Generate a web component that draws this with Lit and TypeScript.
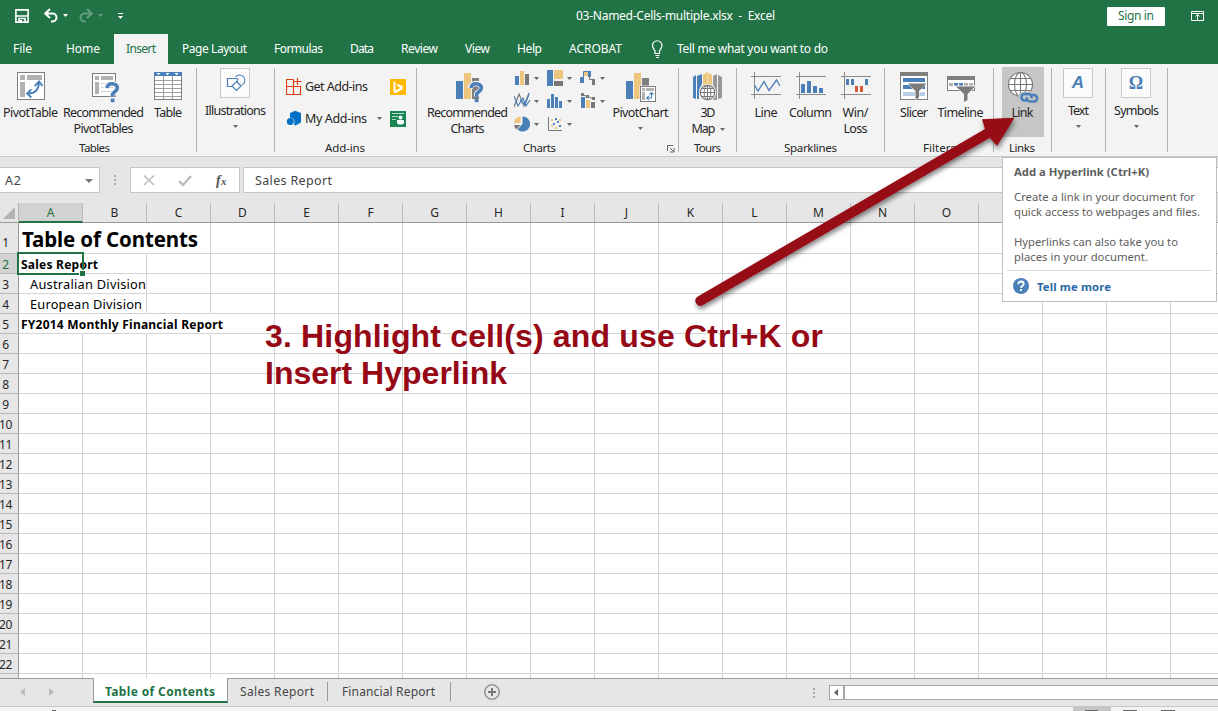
import { LitElement, html, svg, css } from "lit";
import { customElement, property } from "lit/decorators.js";

const BLUE = "#4a7fb8";
const TAN = "#eec57c";
const GREY = "#7f7f7f";

/* A single-line label whose tracking is adjusted to fill a given width. */
@customElement("fit-text")
class FitText extends LitElement {
  @property({ type: Number }) w = 0;
  @property() text = "";
  static styles = css`
    :host { display: block; flex: none; white-space: pre; }
    .box { display: block; }
    .run { display: inline-block; }
  `;
  updated() {
    const run = this.renderRoot.querySelector(".run") as HTMLElement;
    run.style.letterSpacing = "0px";
    const natural = run.getBoundingClientRect().width;
    run.style.letterSpacing = `${(this.w - natural) / Math.max(1, this.text.length - 1)}px`;
  }
  render() {
    return html`<span class="box" style="width:${this.w}px"><span class="run">${this.text}</span></span>`;
  }
}

const t = (text: string, w: number) => html`<fit-text .text=${text} .w=${w}></fit-text>`;

/* Icons share the window's coordinate system through their viewBox. */
const icon = (x: number, y: number, w: number, h: number, body: unknown) =>
  html`<svg class="icon" width=${w} height=${h} viewBox="${x} ${y} ${w} ${h}">${body}</svg>`;

const caret = () => html`<svg class="caret" width="5" height="3" viewBox="0 0 5 3"><path d="M0 0h5L2.500 3z" fill="currentColor"/></svg>`;

const question = (x: number, y: number) => svg`
  <g transform="translate(${x} ${y})" fill="none">
    <path d="M1 6.500C2 3 4 1.500 7 1.500S12.500 3.300 12.500 6.200C12.500 9.700 7.500 9.800 7.500 13.200V14.500" stroke="#f3f3f3" stroke-width="5.500"/>
    <path d="M2 6C2.500 3 4 1.700 7 1.700S12.300 3.300 12.300 6C12.300 9.500 7.500 9.800 7.500 13.200V14.700" stroke=${BLUE} stroke-width="3.600"/>
    <rect x="5.700" y="16.600" width="3.800" height="3.600" fill=${BLUE}/>
  </g>`;

const pivotIcon = icon(15, 70, 32, 32, svg`
  <rect x="17.500" y="72.500" width="27" height="27" fill="#fff" stroke=${GREY}/>
  <path d="M20 75h5v5h-5zM27 75h15v5H27zM20 82h5v15h-5z" fill="#b1b1b1"/>
  <path d="M28.500 93.500c6.500 0 10-3 10.500-11" fill="none" stroke=${BLUE} stroke-width="1.900"/>
  <path d="M34.800 86l4.300-4.600 3.400 4.600M31.300 89.300l-4.200 4.200 4.200 4" fill="none" stroke=${BLUE} stroke-width="1.900"/>`);

const recPivotIcon = icon(88, 70, 32, 34, svg`
  <rect x="92.500" y="73.500" width="23" height="23" fill="#fff" stroke=${GREY}/>
  <path d="M95 76h4v4h-4zM101 76h12v4h-12zM95 82h4v12h-4z" fill="#b1b1b1"/>
  <path d="M101 83.500h12M101 87.500h12M101 91.500h12" stroke="#cfcfcf" stroke-width="1"/>
  ${question(105, 82)}`);

const tableIcon = icon(152, 70, 32, 32, svg`
  <rect x="154.500" y="72.500" width="27" height="27" fill="#fff" stroke=${GREY}/>
  <rect x="154" y="72" width="28" height="4" fill=${BLUE}/>
  <path d="M156.500 73h4l-2 2.200zM165.500 73h4l-2 2.200zM174.500 73h4l-2 2.200z" fill="#fff"/>
  <path d="M163.500 76v23M172.500 76v23M155 80.500h26M155 84.500h26M155 88.500h26M155 92.500h26M155 96.500h26" stroke="#a0a0a0"/>`);

const shapesIcon = icon(221, 68, 30, 30, svg`
  <path d="M236.500 77a5.300 5.300 0 1 1 6 8.300" fill="none" stroke=${BLUE} stroke-width="1.100"/>
  <path d="M233.500 86.500h-5v-8h10v3" fill="none" stroke=${BLUE} stroke-width="1.200"/>
  <path d="M237.500 81.500l4.500 4.500-4.500 4.500-4.500-4.500z" fill="#fff" stroke=${BLUE} stroke-width="1.200"/>`);

const storeIcon = icon(286, 78, 16, 17, svg`
  <path d="M293.500 79.500h-7v15h14v-8h-14M293.500 79.500v15M297.500 78v7M294 81.500h7.500" fill="none" stroke="#dc3e15" stroke-width="1.200"/>`);

const myAddinsIcon = icon(286, 109, 17, 17, svg`
  <path d="M290 112l5-2.300 6 2.300v9.500l-5.500 3-1.500-.700c1.500-4-.500-6.800-4-7.300z" fill="#0072c6"/>
  <circle cx="290.300" cy="120.600" r="3.500" fill="#0072c6"/>`);

const bingIcon = icon(390, 78, 16, 16, svg`
  <rect x="390" y="78" width="16" height="16" fill="#ffb900"/>
  <path d="M393.500 80.500l2 .8v8.200l5-2.800-2.600-1.200-1.200-2.700 6 2.100v3.200l-7.200 4.200-2-1.200z" fill="#fff"/>`);

const peopleIcon = icon(390, 109, 16, 16, svg`
  <rect x="390" y="109" width="16" height="16" fill="#1a8554"/>
  <path d="M392 111.500h12M392 114.500h6M392 117.500h4" stroke="#b5dcc8" stroke-width="1"/>
  <circle cx="400.500" cy="115.500" r="1.900" fill="#fff"/>
  <path d="M397 118h7v3l-1.500 1.500h-4L397 121z" fill="#fff"/>`);

const recChartIcon = icon(452, 70, 32, 34, svg`
  <path d="M456 81h7v18h-7z" fill=${BLUE}/><path d="M464 73h7v26h-7z" fill=${TAN}/><path d="M472 78h7v21h-7z" fill=${GREY}/>
  ${question(469, 82)}`);

const pivotChartIcon = icon(624, 70, 34, 34, svg`
  <path d="M626 81h7v18h-7z" fill=${BLUE}/><path d="M634 73h7v26h-7z" fill=${TAN}/><path d="M642 78h7v8h-7z" fill=${GREY}/>
  <rect x="639.500" y="85.500" width="17" height="17" fill="#f3f3f3"/>
  <rect x="640.500" y="86.500" width="15" height="15" fill="#fff" stroke=${GREY}/>
  <path d="M642 88h3v3h-3zM646 88h8v3h-8zM642 92h3v8h-3z" fill="#b1b1b1"/>
  <path d="M647 98h4.500v-5M649 95.800L646.700 98l2.300 2.200M649.500 94.500l2-2 2 2" fill="none" stroke=${BLUE} stroke-width="1.100"/>`);

const smallCharts = [
  icon(514, 69, 18, 18, svg`<path d="M515 76h4v9h-4z" fill=${BLUE}/><path d="M520 71h4v14h-4z" fill=${TAN}/><path d="M525 74h4v11h-4z" fill="#777"/>`),
  icon(547, 69, 18, 18, svg`<path d="M547 70h6v16h-6z" fill=${BLUE}/><path d="M554 70h9v9h-9z" fill=${TAN}/><path d="M554 81h9v5h-9z" fill="#777"/>`),
  icon(580, 69, 18, 18, svg`<path d="M580 77h4v6h-4zM588 71h3v6h-3z" fill=${BLUE}/><path d="M584 72h4v4h-4z" fill=${TAN}/><path d="M592 79h3v6h-3z" fill="#777"/><path d="M583.500 79v-7.500h7" fill="none" stroke=${BLUE}/><path d="M589.500 76v3.500h3" fill="none" stroke="#777"/>`),
  icon(514, 92, 18, 18, svg`<path d="M514 107l5-13 5 12 5-13" fill="none" stroke="#777" stroke-width="1.200"/><path d="M514 96l4 10 5-8 3 8 4-6M520 100l5 5 4-11" fill="none" stroke=${BLUE} stroke-width="1.200"/>`),
  icon(547, 92, 18, 18, svg`<path d="M547 99h3v9h-3zM551 94h3v14h-3zM555 97h3v11h-3zM559 101h3v7h-3z" fill=${BLUE}/>`),
  icon(580, 92, 18, 18, svg`<path d="M581 97h4v11h-4z" fill=${BLUE}/><path d="M586 100h4v8h-4z" fill=${TAN}/><path d="M591 102h4v6h-4z" fill="#777"/><path d="M582 94.500l5.500 2 6 2.500" stroke="#777" fill="none"/><path d="M581 93h3v3h-3zM586 95h3v3h-3zM592 97h3v3h-3z" fill="#777"/>`),
  icon(514, 115, 18, 18, svg`<path d="M522.500 124v-7.500a7.500 7.500 0 1 1-5 13z" fill=${BLUE}/><path d="M520.500 116.500v6.500h-6.500a6.500 6.500 0 0 1 6.500-6.500z" fill=${TAN}/><path d="M514 125h6.500l-4 4.500a7 7 0 0 1-2.500-4.500z" fill="#777"/>`),
  icon(547, 115, 18, 18, svg`<path d="M548.500 117v13.500H562" fill="none" stroke="#777"/><path d="M551 119h2v2h-2zM559 119h2v2h-2zM551 125h2v2h-2zM555 127h2v2h-2z" fill=${TAN}/><path d="M555 118h2v2h-2zM553 123h2v2h-2zM557 121h2v2h-2zM559 125h2v2h-2z" fill=${BLUE}/>`),
];

const mapIcon = icon(692, 70, 32, 34, svg`
  <path d="M693 77l3-2v24l-3-1zM697 76l5-2v10l-3 6v9h-2z" fill=${BLUE}/>
  <path d="M703 75l4-3 5 3v12h-9z" fill=${TAN}/><path d="M707.500 72v14" stroke="#f7dca9"/>
  <path d="M713 76l4-2v26h-4zM718 75l4 2v21l-4 1z" fill="#999"/>
  <circle cx="707.500" cy="92.500" r="8.700" fill="#f3f3f3"/>
  <circle cx="707.500" cy="92.500" r="7.200" fill="#fff" stroke="#777" stroke-width="1.200"/>
  <ellipse cx="707.500" cy="92.500" rx="3.400" ry="7.200" fill="none" stroke="#777"/>
  <path d="M707.500 85v15M700 92.500h15M701.500 88.500h12M701.500 96.500h12" stroke="#777"/>`);

const axes = (x: number) => svg`<path d="M${x + 3.5} 72v27M${x} 76.500h30M${x} 94.500h30" stroke="#8a8a8a" fill="none"/>`;
const lineIcon = icon(750, 70, 32, 32, svg`${axes(751)}<path d="M754.500 85l3.500 6 6-9.500 5 9 7.500-10.500 3.500 6" fill="none" stroke=${BLUE} stroke-width="1.300"/>`);
const columnIcon = icon(795, 70, 32, 32, svg`${axes(796)}<path d="M801 84h4v9h-4zM807 81h4v12h-4zM813 86h4v7h-4zM819 88h4v5h-4z" fill=${BLUE}/>`);
const winIcon = icon(840, 70, 32, 32, svg`${axes(841)}<path d="M846 79h3v6h-3zM851 79h3v6h-3zM865 79h3v6h-3z" fill=${BLUE}/><path d="M855 86h3v6h-3zM860 86h3v6h-3z" fill="#d9573a"/>`);

const slicerIcon = icon(898, 70, 32, 34, svg`
  <rect x="900.500" y="72.500" width="27" height="27" fill="#fff" stroke=${GREY}/><rect x="900" y="72" width="28" height="4" fill=${GREY}/>
  <path d="M903 78h22v4h-22zM903 85h22v4h-22z" fill=${BLUE}/><path d="M903 92h22v4h-22z" fill="#b9cfe6"/>
  <path d="M906.500 82.500h21l-8 8.500v6l-4.500 4v-10z" fill="#fff"/><path d="M908 83.500h18.500l-7.500 7.500v6.500l-3.500 2.500v-9z" fill="#7a7a7a"/>`);
const timelineIcon = icon(944, 70, 32, 34, svg`
  <rect x="946.500" y="76.500" width="27" height="14" fill="#fff" stroke=${GREY}/><rect x="946" y="76" width="28" height="4" fill=${GREY}/>
  <path d="M948 83h4v3h-4zM963 83h4v3h-4zM968 83h4v3h-4z" fill="#b1b1b1"/><path d="M953 83h4v3h-4zM958 83h4v3h-4z" fill=${BLUE}/>
  <path d="M953.500 85.500h22l-8 8.500v8h-5.500v-8z" fill="#f3f3f3"/><path d="M955 86.500h19l-7.500 7.500v6l-3.500 2v-8z" fill="#7a7a7a"/>`);
const linkIcon = icon(1006, 70, 34, 34, svg`
  <g fill="none" stroke="#777" stroke-width="1.100">
  <circle cx="1020.500" cy="84.500" r="12" fill="#fff"/><ellipse cx="1020.500" cy="84.500" rx="6" ry="12"/>
  <path d="M1020.500 72.500v24M1008.500 84.500h24M1010.500 78.500h20M1010.500 90.500h20"/></g>
  <rect x="1018" y="91.500" width="22" height="12" rx="6" fill="#c6c6c6"/>
  <g fill="none" stroke=${BLUE} stroke-width="2.500"><path d="M1027.500 100.500h-3.500a3.400 3.400 0 0 1 0-6.600h4.500a3.400 3.400 0 0 1 3 4.400"/><path d="M1030.500 95h4a3.400 3.400 0 0 1 0 6.600h-4.500a3.400 3.400 0 0 1-3-4.400"/></g>`);

type Line = [string, number];

@customElement("app-root")
class AppRoot extends LitElement {
  static styles = css`
    :host {
      display: flex; flex-direction: column; position: relative; width: 1218px; height: 711px; overflow: hidden;
      font-family: "Noto Sans", "Open Sans", sans-serif; font-size: 12px; line-height: 16px; color: #262626; background: #e6e6e6;
    }
    * { box-sizing: border-box; }
    svg { display: block; flex: none; }
    .caret { color: #666; }
    .row { display: flex; align-items: center; }

    .title { flex: none; height: 34px; background: #217346; color: #fff; display: grid; grid-template-columns: 576px 1fr auto; align-items: center; padding-bottom: 2px; }
    .quick { padding-left: 15px; }
    .account { gap: 26px; padding-right: 14px; }
    .signin { width: 58px; height: 19px; background: #fff; color: #217346; border-radius: 1px; display: flex; align-items: center; justify-content: center; }
    .menu { flex: none; height: 30px; background: #217346; color: #fff; display: flex; align-items: stretch; padding-left: 1px; }
    .tab { display: flex; align-items: center; padding: 0 12px; margin-right: 3px; }
    .tab.file { margin-right: 10px; }
    .tab.active { background: #f3f3f3; color: #217346; margin: 0 2px 0 -1px; }
    .tell { gap: 13px; margin-left: 14px; }

    .ribbon { flex: none; height: 93px; background: #f3f3f3; display: flex; border-bottom: 1px solid #c9c9c9; padding-top: 4px; font-size: 12.5px; }
    .group { flex: none; height: 84px; border-right: 1px solid #b2b2b2; display: grid; grid-template-rows: 72px 12px; }
    .body { display: flex; align-items: flex-start; }
    .body.center { justify-content: center; }
    .caption { display: flex; align-items: center; font-size: 11.5px; position: relative; padding-top: 3px; }
    .launcher { position: absolute; right: 3px; bottom: -1px; }
    .btn { flex: none; height: 70px; display: flex; flex-direction: column; align-items: center; padding-top: 2px; }
    .glyph { height: 35px; display: flex; align-items: flex-start; flex: none; }
    .btn .drop { margin-top: 6px; }
    .btn .row { gap: 4px; }
    .btn.hot { background: #c6c6c6; margin-top: -1px; padding-top: 3px; }
    .boxed { flex: none; display: flex; flex-direction: column; align-items: center; }
    .tile { width: 30px; height: 30px; background: #fbfbfb; border: 1px solid #c8c8c8; display: flex; align-items: center; justify-content: center; margin: 0 1px 5px 0; color: #4a7fb8; }
    .tile .icon { margin: -1px; }
    .tile.text { font: italic bold 17px "Liberation Sans"; }
    .tile.omega { font: bold 18px "Liberation Serif"; }
    .boxed .drop { margin-top: 6px; }
    .addins { padding: 10px 10px 0 11px; display: grid; grid-template-columns: 19px 72px 13px 16px; row-gap: 15px; align-items: center; height: 57px; }
    .charts { display: grid; grid-template-columns: repeat(3, 33px); grid-auto-rows: 23px; padding-top: 1px; margin-left: -4px; }
    .charts .row { gap: 2px; align-items: center; height: 18px; }

    .formula { flex: none; height: 46px; padding-top: 10px; display: flex; font-size: 12.5px; color: #444; }
    .field { height: 26px; background: #fff; border: 1px solid #c6c6c6; display: flex; align-items: center; }
    .name { width: 100px; border-left: 0; padding: 1px 6px 0 5px; justify-content: space-between; }
    .grip { width: 30px; display: flex; align-items: center; justify-content: center; }
    .formula .grip { height: 26px; }
    .tools { width: 110px; justify-content: space-between; padding: 0 11px; }
    .value { flex: 1; margin-left: 3px; padding: 1px 0 0 11px; border-right: 0; }

    .cols { flex: none; height: 20px; display: flex; border-bottom: 1px solid #999; }
    .corner { width: 19px; flex: none; border-right: 1px solid #b1b1b1; display: flex; align-items: center; padding-left: 3px; }
    .col { width: 64px; flex: none; border-right: 1px solid #b9b9b9; text-align: center; line-height: 19px; height: 19px; }
    .col.sel { background: #d2d2d2; color: #217346; height: 20px; border-bottom: 2px solid #217346; }
    .sheet { flex: none; height: 455px; overflow: hidden; background: #fff; }
    .line { display: flex; height: 20px; }
    .line.first { height: 31px; }
    .num { width: 19px; flex: none; background: #e6e6e6; border-right: 1px solid #999; border-bottom: 1px solid #b9b9b9; display: flex; justify-content: center; align-items: flex-end; padding-right: 7px; line-height: 17px; font-size: 12px; }
    .num span { flex: none; letter-spacing: -0.4px; }
    .num.sel { background: #d2d2d2; color: #217346; }
    .first .num { padding-bottom: 2px; }
    .cell { width: 64px; flex: none; border-right: 1px solid #d4d4d4; border-bottom: 1px solid #d4d4d4; display: flex; align-items: center; padding: 2px 0 0 2px; color: #000; }
    .cell.open { border-right-color: transparent; }
    .cell.b { font-weight: bold; }
    .cell.in { padding: 0 0 0 11px; font-size: 12.8px; }
    .first .cell { font-size: 20.5px; padding: 1px 0 0 3px; }
    .select { position: absolute; left: 17px; top: 252px; width: 67px; height: 23px; border: 2px solid #217346; }
    .handle { position: absolute; right: -3px; bottom: -3px; width: 6px; height: 6px; background: #217346; border: 1px solid #fff; border-width: 1px 0 0 1px; }

    .tabs { flex: none; height: 28px; border-top: 1px solid #999; display: flex; color: #444; }
    .nav { width: 93px; display: flex; gap: 24px; padding: 0 0 2px 20px; align-items: center; }
    .tabs .sheet-tab { height: 25px; display: flex; align-items: center; justify-content: center; padding-right: 1px; }
    .tabs .sheet-tab.on { width: 135px; background: #fff; margin-top: -1px; padding: 4px 1px 0 0; border: 1px solid #999; border-width: 0 1px 2px; border-bottom-color: #217346; color: #217346; font-weight: bold; }
    .bar { width: 1px; height: 19px; margin-top: 3px; background: #999; }
    .add { margin: 5px 0 0 33px; }
    .spacer { flex: 1; }
    .scroll { width: 389px; height: 15px; margin-top: 6px; background: #fff; border: 1px solid #a6a6a6; border-right: 0; display: flex; }
    .arrow { width: 15px; border-right: 2px solid #a6a6a6; display: flex; align-items: center; padding-left: 4px; }
    .status { flex: none; height: 5px; background: #f3f3f3; border-top: 1px solid #c6c6c6; }

    .tip { position: absolute; left: 1002px; top: 157px; width: 215px; height: 145px; background: #fff; border: 1px solid #bebebe; color: #5e5e5e; padding: 6px 4px; font-size: 11.3px; line-height: 15px; }
    .tip .copy { padding-left: 7px; height: 106px; }
    .tip .head { font-weight: bold; margin-bottom: 9px; line-height: 16px; }
    .gap { height: 15px; }
    .more { border-top: 1px solid #dcdcdc; display: flex; align-items: center; gap: 8px; padding: 7px 0 0 6px; color: #2b69a5; font-weight: bold; }
    .note { position: absolute; left: 265px; top: 318px; font: bold 32px/37px "Liberation Sans", Arial, sans-serif; color: #960816; }
    .pointer { position: absolute; left: 680px; top: 100px; }
  `;

  btn(w: number, glyph: unknown, lines: Line[], opts: { drop?: boolean; hot?: boolean; inline?: boolean } = {}) {
    return html`<div class="btn ${opts.hot ? "hot" : ""}" style="width:${w}px">
      <div class="glyph">${glyph}</div>
      ${lines.map(([s, n], i) => opts.inline && i === lines.length - 1
        ? html`<div class="row">${t(s, n)}${caret()}</div>` : t(s, n))}
      ${opts.drop ? html`<div class="drop">${caret()}</div>` : ""}
    </div>`;
  }

  boxed(cls: string, glyph: unknown, label: string, n: number) {
    return html`<div class="boxed"><div class="tile ${cls}">${glyph}</div>${t(label, n)}<div class="drop">${caret()}</div></div>`;
  }

  group(w: number, body: unknown, label = "", n = 0, indent = 0, extra: unknown = "", cls = "") {
    return html`<div class="group" style="width:${w}px"><div class="body ${cls}">${body}</div>
      <div class="caption" style="padding-left:${indent}px">${label ? t(label, n) : ""}${extra}</div></div>`;
  }

  line(n: number) {
    const texts: Record<number, [string, number, string, number]> = {
      1: ["Table of Contents", 176, "b", 2], 2: ["Sales Report", 77, "b", 1],
      3: ["Australian Division", 116, "in", 1], 4: ["European Division", 112, "in", 1],
      5: ["FY2014 Monthly Financial Report", 202, "b", 3],
    };
    const entry = texts[n];
    return html`<div class="line ${n === 1 ? "first" : ""}">
      <div class="num ${n === 2 ? "sel" : ""}">${n < 23 ? html`<span>${n}</span>` : ""}</div>
      ${Array.from({ length: 19 }, (_, c) => html`<div class="cell ${entry && c < entry[3] ? "open" : ""} ${entry && c === 0 ? entry[2] : ""}">
        ${entry && c === 0 ? t(entry[0], entry[1]) : ""}</div>`)}
    </div>`;
  }

  render() {
    const menus: Line[] = [["File", 19], ["Home", 34], ["Insert", 30], ["Page Layout", 65], ["Formulas", 49], ["Data", 24], ["Review", 37], ["View", 25], ["Help", 25], ["ACROBAT", 53]];
    return html`
      <div class="title">
        <div class="quick">${icon(15, 8, 110, 18, svg`
          <path d="M15.900 10.900h12.200v12.200H15.900zM16 17h12M19 23v-3.500h6V23" fill="none" stroke="#fff" stroke-width="1.600"/>
          <path d="M20 21h2v2h-2z" fill="#fff"/>
          <path d="M45 14.500h7.500a4 4 0 0 1 0 8H51M50 10l-4.800 4.500L50 19" fill="none" stroke="#fff" stroke-width="2"/>
          <path d="M63 15h5l-2.500 3z" fill="#fff"/>
          <g opacity=".3"><path d="M92 14.500h-7.500a4 4 0 0 0 0 8H86M87 10l4.800 4.500L87 19" fill="none" stroke="#fff" stroke-width="2"/><path d="M98 15h5l-2.500 3z" fill="#fff"/></g>
          <path d="M118 14.500h5" stroke="#fff"/><path d="M118 17h5l-2.500 3z" fill="#fff"/>`)}</div>
        ${t("03-Named-Cells-multiple.xlsx  -  Excel", 199)}
        <div class="row account"><div class="signin">${t("Sign in", 36)}</div>
          ${icon(1191, 9, 13, 12, svg`<path d="M1191.500 10.500h12v9h-12zM1191 12.500h13M1197.500 19v-5M1195.500 15.500l2-2 2 2" fill="none" stroke="#fff"/>`)}</div>
      </div>
      <div class="menu">
        ${menus.map(([s, n]) => html`<div class="tab ${s === "File" ? "file" : ""} ${s === "Insert" ? "active" : ""}">${t(s, n)}</div>`)}
        <div class="row tell">${icon(651, 40, 13, 18, svg`<path d="M655 53.500v-2.500c-.500-1.500-2.500-3-2.500-5.500a4.700 4.700 0 0 1 9.500 0c0 2.500-2 4-2.500 5.500v2.500zM655.500 55.500h4M656 57.500h3" fill="none" stroke="#fff" stroke-width="1.200"/>`)}${t("Tell me what you want to do", 151)}</div>
      </div>
      <div class="ribbon">
        ${this.group(197, [this.btn(61, pivotIcon, [["PivotTable", 55]]), this.btn(85, recPivotIcon, [["Recommended", 81], ["PivotTables", 60]]), this.btn(44, tableIcon, [["Table", 28]])], "Tables", 31, 79)}
        ${this.group(78, this.boxed("", shapesIcon, "Illustrations", 61), "", 0, 0, "", "center")}
        ${this.group(142, html`<div class="addins">
            ${storeIcon}${t("Get Add-ins", 63)}<span></span>${bingIcon}
            ${myAddinsIcon}${t("My Add-ins", 62)}${caret()}${peopleIcon}</div>`, "Add-ins", 40, 50)}
        ${this.group(262, [this.btn(101, recChartIcon, [["Recommended", 81], ["Charts", 34]]),
            html`<div class="charts">${smallCharts.map((c) => html`<div class="row">${c}${caret()}</div>`)}</div>`,
            this.btn(55, pivotChartIcon, [["PivotChart", 56]], { drop: true })], "Charts", 33, 106,
            html`<svg class="launcher" width="8" height="8"><path d="M.5 6V.5H6M3 3l3.500 3.500M7 3v4H3" fill="none" stroke="#666"/></svg>`)}
        ${this.group(58, this.btn(58, mapIcon, [["3D", 15], ["Map", 24]], { inline: true }), "Tours", 27, 15)}
        ${this.group(148, [this.btn(58, lineIcon, [["Line", 23]]), this.btn(31, columnIcon, [["Column", 43]]), this.btn(59, winIcon, [["Win/", 26], ["Loss", 24]])], "Sparklines", 53, 47)}
        ${this.group(109, [this.btn(58, slicerIcon, [["Slicer", 28]]), this.btn(35, timelineIcon, [["Timeline", 46]])], "Filters", 33, 38)}
        ${this.group(58, this.btn(42, linkIcon, [["Link", 22]], { hot: true }), "Links", 26, 15, "", "center")}
        ${this.group(54, this.boxed("text", "A", "Text", 21), "", 0, 0, "", "center")}
        ${this.group(62, this.boxed("omega", "Ω", "Symbols", 45), "", 0, 0, "", "center")}
      </div>
      <div class="formula">
        <div class="field name">${t("A2", 16)}<svg width="8" height="4"><path d="M0 0h8L4 4z" fill="#777"/></svg></div>
        <div class="grip"><svg width="2" height="10"><path d="M0 0h2v2H0zM0 4h2v2H0zM0 8h2v2H0z" fill="#aaa"/></svg></div>
        <div class="field tools">${icon(142, 172, 88, 16, svg`
          <path d="M144 175.500l10 9.500M154 175.500l-10 9.500" stroke="#bbb" stroke-width="1.500"/>
          <path d="M179 181l4 4 8-9" fill="none" stroke="#bbb" stroke-width="2.300"/>
          <text x="216" y="185" font-family="Liberation Serif" font-style="italic" font-weight="bold" font-size="14" fill="#555">f</text>
          <text x="221" y="185" font-family="Liberation Serif" font-style="italic" font-weight="bold" font-size="11" fill="#555">x</text>`)}</div>
        <div class="field value">${t("Sales Report", 77)}</div>
      </div>
      <div class="cols"><div class="corner"><svg width="12" height="12"><path d="M12 0v12H0z" fill="#b3b3b3"/></svg></div>
        ${[..."ABCDEFGHIJKLMNO", "", "", ""].map((c) => html`<div class="col ${c === "A" ? "sel" : ""}">${c}</div>`)}</div>
      <div class="sheet">${Array.from({ length: 23 }, (_, i) => this.line(i + 1))}</div>
      <div class="tabs">
        <div class="nav"><svg width="5" height="8"><path d="M5 0v8L0 4z" fill="#bbb"/></svg><svg width="5" height="8"><path d="M0 0v8l5-4z" fill="#bbb"/></svg></div>
        <div class="sheet-tab on">${t("Table of Contents", 110)}</div>
        <div class="sheet-tab" style="width:99px">${t("Sales Report", 74)}</div><div class="bar"></div>
        <div class="sheet-tab" style="width:122px">${t("Financial Report", 93)}</div><div class="bar"></div>
        <svg class="add" width="16" height="16"><circle cx="8" cy="8" r="7.300" fill="none" stroke="#777" stroke-width="1.100"/><path d="M8 4v8M4 8h8" stroke="#777" stroke-width="2"/></svg>
        <div class="spacer"></div>
        <div class="grip"><svg width="2" height="10"><path d="M0 0h2v2H0zM0 4h2v2H0zM0 8h2v2H0z" fill="#aaa"/></svg></div>
        <div class="scroll"><div class="arrow"><svg width="4" height="7"><path d="M4 0v7L0 3.500z" fill="#666"/></svg></div></div>
      </div>
      <div class="status">${icon(0, 707, 1218, 4, svg`<path d="M1073 707h38v4h-38z" fill="#c6c6c6"/><path d="M1085 710h13v1h-13zM1123 710h14v1h-14zM1161 710h14v1h-14zM52 710h4v1h-4z" fill="#666"/>`)}</div>

      <div class="select"><div class="handle"></div></div>
      <div class="tip">
        <div class="copy"><div class="head">${t("Add a Hyperlink (Ctrl+K)", 135)}</div>
          ${t("Create a link in your document for", 181)}${t("quick access to webpages and files.", 186)}
          <div class="gap"></div>
          ${t("Hyperlinks can also take you to", 164)}${t("places in your document.", 134)}</div>
        <div class="more"><svg width="16" height="16"><circle cx="8" cy="8" r="8" fill=${BLUE}/><path d="M5.300 6.200C5.400 4.300 6.500 3.500 8 3.500s2.700.900 2.700 2.400C10.700 7.700 8 7.800 8 10" fill="none" stroke="#fff" stroke-width="1.800"/><path d="M7 11h2v2H7z" fill="#fff"/></svg>${t("Tell me more", 74)}</div>
      </div>
      <div class="note">${t("3. Highlight cell(s) and use Ctrl+K or", 558)}${t("Insert Hyperlink", 242)}</div>
      <svg class="pointer" width="350" height="215" viewBox="680 100 350 215">
        <defs><filter id="s" x="-10%" y="-10%" width="120%" height="125%"><feDropShadow dx="1" dy="3" stdDeviation="2.500" flood-color="#000" flood-opacity=".5"/></filter></defs>
        <path filter="url(#s)" d="M697.500 296.700L985 129l-3-9.700 32.500-1.500L997 146l-7.200-8.300L702.500 305.300a5 5 0 0 1-5-8.600z" fill="#960816"/>
      </svg>`;
  }
}
